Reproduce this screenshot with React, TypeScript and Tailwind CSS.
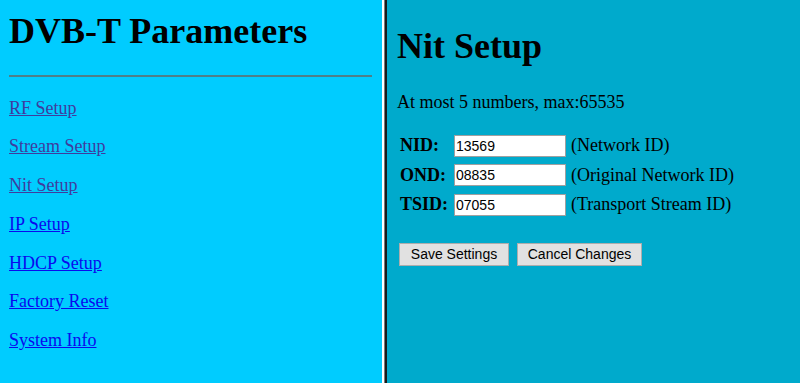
import React from "react";

const serif = { fontFamily: '"Liberation Serif", "Times New Roman", serif' };
const sans = { fontFamily: '"Liberation Sans", Arial, sans-serif' };

const links: { label: string; visited: boolean }[] = [
  { label: "RF Setup", visited: true },
  { label: "Stream Setup", visited: true },
  { label: "Nit Setup", visited: true },
  { label: "IP Setup", visited: false },
  { label: "HDCP Setup", visited: false },
  { label: "Factory Reset", visited: false },
  { label: "System Info", visited: false },
];

const rows = [
  { label: "NID:", value: "13569", desc: "(Network ID)" },
  { label: "OND:", value: "08835", desc: "(Original Network ID)" },
  { label: "TSID:", value: "07055", desc: "(Transport Stream ID)" },
];

export default function App() {
  return (
    <div className="flex h-[383px] w-[800px] overflow-hidden text-black" style={serif}>
      {/* Left frame */}
      <div className="flex w-[382px] shrink-0 flex-col bg-[#00ccff] pl-[9px] pr-[10px]">
        <h1 className="mt-[11px] text-[36px] font-bold leading-[40px]">DVB-T Parameters</h1>
        <div className="mt-[24px] h-[2px] w-[363px] bg-[#4f7f88]" />
        <div className="mt-[20.5px] flex flex-col items-start gap-[17.8px]">
          {links.map((l) => (
            <a
              key={l.label}
              href="#"
              className={`text-[18px] leading-[21px] underline ${l.visited ? "text-[#3f3c9e]" : "text-[#0a0aee]"}`}
            >
              {l.label}
            </a>
          ))}
        </div>
      </div>

      {/* Frame divider */}
      <div className="w-[2px] shrink-0 bg-white" />
      <div className="w-[1px] shrink-0 bg-[#7a7a7a]" />
      <div className="w-[2px] shrink-0 bg-[#1a1a1a]" />

      {/* Right frame */}
      <div className="flex flex-1 flex-col bg-[#00aacc] pl-[10px]">
        <h1 className="mt-[26px] text-[36px] font-bold leading-[40px]">Nit Setup</h1>
        <p className="mt-[25.7px] text-[18px] leading-[21px]">At most 5 numbers, max:65535</p>
        <div className="mt-[18.5px] flex flex-col">
          {rows.map((r) => (
            <div key={r.label} className="flex h-[29.5px] items-center pl-[3px]">
              <span className="w-[54px] text-[18px] font-bold leading-[21px]">{r.label}</span>
              <input
                readOnly
                value={r.value}
                className="h-[22px] w-[112px] border border-[#a0a0a0] bg-white px-[1px] text-[14px] text-black outline-none"
                style={sans}
              />
              <span className="ml-[5px] text-[18px] leading-[21px]">{r.desc}</span>
            </div>
          ))}
        </div>
        <div className="mt-[23px] flex gap-[8px] pl-[2px]">
          <button
            className="h-[23px] w-[110px] border border-[#adadad] bg-[#e1e1e1] text-[14px] text-black"
            style={sans}
          >
            Save Settings
          </button>
          <button
            className="h-[23px] w-[125px] border border-[#adadad] bg-[#e1e1e1] text-[14px] text-black"
            style={sans}
          >
            Cancel Changes
          </button>
        </div>
      </div>
    </div>
  );
}
